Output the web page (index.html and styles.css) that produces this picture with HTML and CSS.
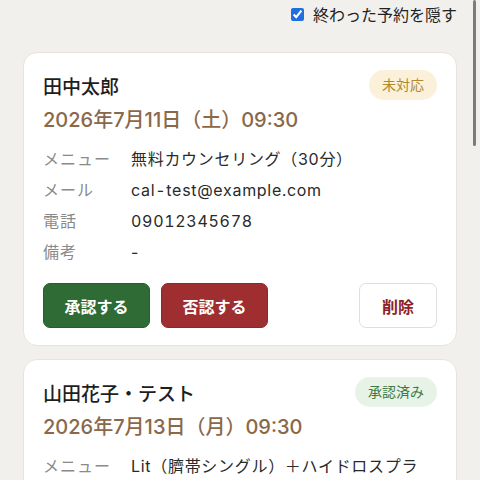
FILE: index.html
```html
<!DOCTYPE html>
<html lang="ja">
<head>
<meta charset="UTF-8">
<meta name="viewport" content="width=device-width, initial-scale=1.0">
<title>予約一覧</title>
<link rel="stylesheet" href="styles.css">
</head>
<body>
  <div class="scroll-thumb"></div>

  <div class="page">
    <div class="toolbar">
      <label class="hide-done">
        <input type="checkbox" checked>
        終わった予約を隠す
      </label>
    </div>

    <div class="card">
      <div class="card-head">
        <div class="name">田中太郎</div>
        <span class="badge badge-pending">未対応</span>
      </div>
      <div class="date">2026年7月11日（土）09:30</div>
      <dl class="details">
        <dt>メニュー</dt><dd>無料カウンセリング（30分）</dd>
        <dt>メール</dt><dd class="latin">cal-test@example.com</dd>
        <dt>電話</dt><dd class="latin">09012345678</dd>
        <dt>備考</dt><dd>-</dd>
      </dl>
      <div class="actions">
        <button class="btn btn-approve">承認する</button>
        <button class="btn btn-reject">否認する</button>
        <button class="btn btn-delete">削除</button>
      </div>
    </div>

    <div class="card">
      <div class="card-head">
        <div class="name">山田花子・テスト</div>
        <span class="badge badge-approved">承認済み</span>
      </div>
      <div class="date">2026年7月13日（月）09:30</div>
      <dl class="details">
        <dt>メニュー</dt><dd>Lit（臍帯シングル）＋ハイドロスプラッシュ</dd>
      </dl>
    </div>
  </div>
</body>
</html>
```

FILE: styles.css
```css
html {
  overflow: hidden;
}

body {
  margin: 0;
  padding: 0;
  background-color: #f2f0ec;
  font-family: Inter, "Noto Sans CJK JP", sans-serif;
  color: #222;
}

.scroll-thumb {
  position: fixed;
  top: 0;
  right: 4px;
  width: 3px;
  height: 146px;
  background-color: #7c7c7c;
  border-radius: 2px;
}

.page {
  padding: 0 23px;
}

.toolbar {
  display: flex;
  justify-content: flex-end;
  align-items: center;
  height: 28px;
  margin-bottom: 24px;
}

.hide-done {
  display: flex;
  align-items: center;
  gap: 9px;
  font-size: 16px;
  color: #222;
}

.hide-done input {
  width: 13px;
  height: 13px;
  margin: 0;
  accent-color: #1f6fe0;
}

.card {
  background-color: #fff;
  border: 1px solid #e7e3dd;
  border-radius: 14px;
  padding: 17px 19px 17px 19px;
  margin-bottom: 13px;
}

.card-head {
  display: flex;
  justify-content: space-between;
  align-items: center;
  height: 30px;
}

.name {
  font-size: 19px;
  font-weight: 500;
  color: #1e1e1e;
}

.badge {
  font-size: 14px;
  line-height: 30px;
  padding: 0 13px;
  border-radius: 15px;
}

.badge-pending {
  background-color: #fbf0da;
  color: #b08a2c;
}

.badge-approved {
  background-color: #e7f3e7;
  color: #3f7a47;
}

.date {
  margin-top: 5px;
  font-size: 20px;
  line-height: 30px;
  font-weight: 500;
  color: #8a6848;
}

.details {
  display: grid;
  grid-template-columns: 88px 1fr;
  margin: 9px 0 0 0;
  font-size: 16px;
  line-height: 31px;
}

.details dt {
  color: #8a8a8a;
  letter-spacing: 1px;
}

.details dd {
  margin: 0;
  padding-right: 12px;
  color: #2a2a2a;
  letter-spacing: 0.7px;
}

.details dd.latin {
  letter-spacing: 0.7px;
  font-variant-numeric: tabular-nums;
}

.actions {
  display: flex;
  gap: 11px;
  margin-top: 15px;
}

.btn {
  height: 45px;
  border-radius: 7px;
  font-family: inherit;
  font-size: 16px;
  font-weight: 700;
  cursor: pointer;
}

.btn-approve {
  width: 107px;
  background-color: #2f6b35;
  border: 1px solid #285d2e;
  color: #fff;
}

.btn-reject {
  width: 107px;
  background-color: #9e2e2f;
  border: 1px solid #8c2829;
  color: #fff;
}

.btn-delete {
  width: 78px;
  margin-left: auto;
  background-color: #fff;
  border: 1px solid #e2dfda;
  color: #8c2226;
}
```
